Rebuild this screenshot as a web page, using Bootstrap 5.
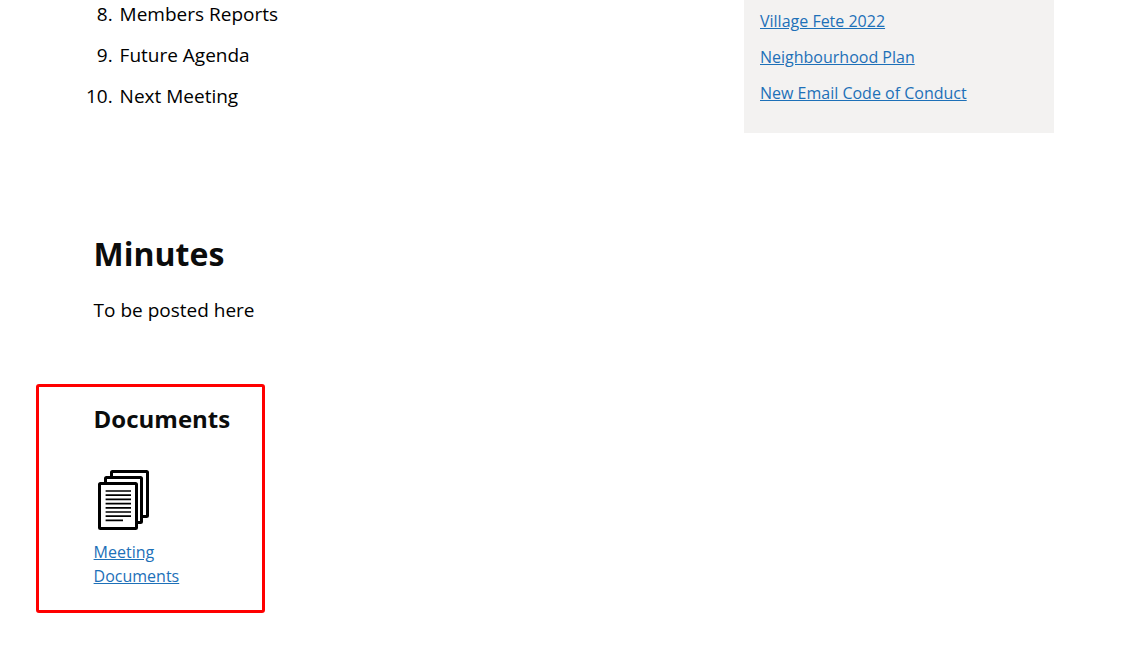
<!DOCTYPE html>
<html lang="en">
<head>
  <meta charset="UTF-8">
  <title>Agenda</title>
  <link href="https://cdn.jsdelivr.net/npm/bootstrap@5.3.0/dist/css/bootstrap.min.css" rel="stylesheet">
  <style>
    html, body { height: 647px; overflow: hidden; }
    body { font-family: "Open Sans", sans-serif; color: #000; background: #fff; }
    a { color: #1d70b8; }
    .page-top { height: 133px; padding-left: 93.6px; padding-right: 67px; }
    .agenda-list { width: 650px; margin: 0; padding: 1px 0 0 24px; font-size: 19px; line-height: 27px; }
    .agenda-list li { margin-bottom: 14px; padding-left: 2px; }
    .side-box { width: 310px; background: #f3f2f1; padding: 9px 16px 0; font-size: 16px; }
    .side-box div { line-height: 24px; margin-bottom: 12px; }
    .minutes { padding: 99px 0 0 93.6px; }
    .minutes h2 { font-size: 32px; font-weight: 700; line-height: 44px; margin: 0 0 21px; color: #0b0c0c; }
    .minutes p { font-size: 19px; line-height: 27px; margin: 0; }
    .doc-box { width: 229px; height: 229px; margin: 60px 0 0 36px; padding: 15px 0 0 54.600px; border: 3px solid #f00; border-radius: 3px; }
    .doc-box h3 { font-size: 24px; font-weight: 700; line-height: 33px; margin: 0 0 34px; color: #0b0c0c; }
    .doc-box svg { display: block; margin-bottom: 9px; }
    .doc-box a { display: block; width: 120px; font-size: 16px; line-height: 24px; }
  </style>
</head>
<body>
  <div class="page-top d-flex justify-content-between">
    <ol class="agenda-list" start="8">
      <li>Members Reports</li>
      <li>Future Agenda</li>
      <li>Next Meeting</li>
    </ol>
    <div class="side-box">
      <div><a href="#">Village Fete 2022</a></div>
      <div><a href="#">Neighbourhood Plan</a></div>
      <div><a href="#">New Email Code of Conduct</a></div>
    </div>
  </div>

  <div class="minutes">
    <h2>Minutes</h2>
    <p>To be posted here</p>
  </div>

  <div class="doc-box">
    <h3>Documents</h3>
    <svg width="60" height="62" viewBox="0 0 60 62" fill="#fff" stroke="#000" stroke-linejoin="round">
      <rect x="17.500" y="2.500" width="36" height="45" rx="1" stroke-width="3"/>
      <rect x="11.500" y="8.500" width="36" height="45" rx="1" stroke-width="3"/>
      <rect x="5.500" y="14.500" width="37" height="45" rx="1" stroke-width="3"/>
      <path d="M11.600 22H37M11.600 26.200H37M11.600 30.400H37M11.600 34.600H37M11.600 38.800H37M11.600 43H37M11.600 47.200H37M11.600 51.400H29" fill="none" stroke-width="1.700"/>
    </svg>
    <a href="#">Meeting Documents</a>
  </div>

  <script src="https://cdn.jsdelivr.net/npm/bootstrap@5.3.0/dist/js/bootstrap.bundle.min.js"></script>
</body>
</html>
